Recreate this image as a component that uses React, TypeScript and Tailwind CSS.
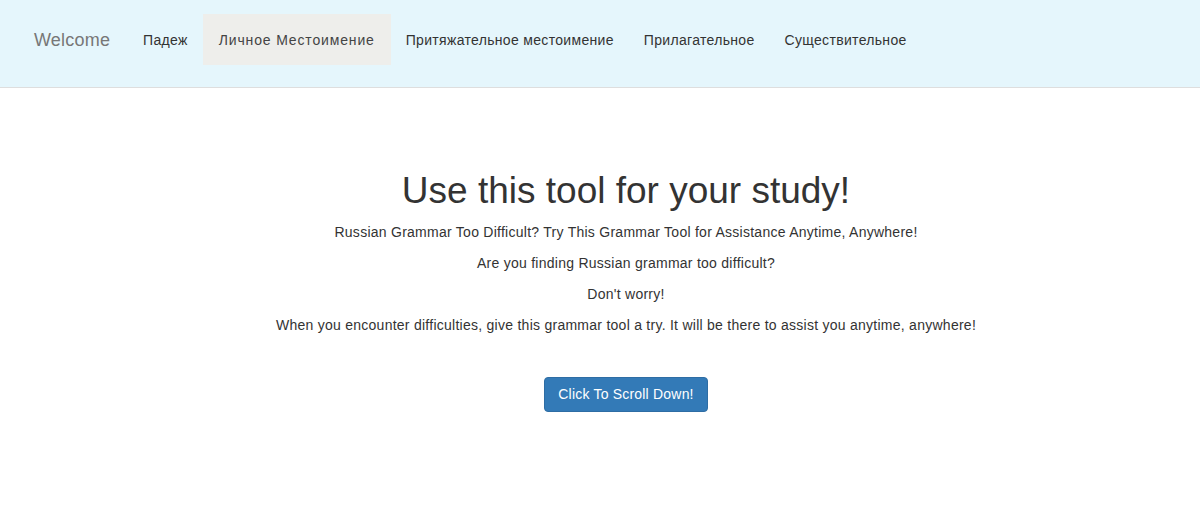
import React from "react";

const links = ["Падеж", "Личное Местоимение", "Притяжательное местоимение", "Прилагательное", "Существительное"];

export default function App() {
  return (
    <div className="min-h-[516px] bg-white" style={{ fontFamily: '"Liberation Sans", Arial, sans-serif' }}>
      <nav className="h-[88px] bg-[#e5f6fc] border-b border-[#dedede] pt-[14px] pl-[19px]">
        <div className="flex items-start h-[51px]">
          <a className="pl-[15px] pr-[18px] h-[51px] leading-[53px] text-[18px] text-[#777] tracking-[0.2px]">Welcome</a>
          {links.map((l, i) => (
            <a
              key={l}
              className={`px-[15px] h-[51px] leading-[53px] text-[14px] ${
                i === 1 ? "bg-[#eeeeeb] text-[#444] px-[16px] tracking-[0.85px]" : "text-[#333] tracking-[0.32px]"
              }`}
            >
              {l}
            </a>
          ))}
        </div>
      </nav>
      <main className="pl-[52px] text-center text-[#333]">
        <h1 className="mt-[82px] text-[37px] leading-[42px] mb-[10px]">Use this tool for your study!</h1>
        <p className="text-[14px] leading-[20px] mb-[11px] tracking-[0.26px]">Russian Grammar Too Difficult? Try This Grammar Tool for Assistance Anytime, Anywhere!</p>
        <p className="text-[14px] leading-[20px] mb-[11px] tracking-[0.26px]">Are you finding Russian grammar too difficult?</p>
        <p className="text-[14px] leading-[20px] mb-[11px] tracking-[0.26px]">Don't worry!</p>
        <p className="text-[14px] leading-[20px] tracking-[0.26px]">When you encounter difficulties, give this grammar tool a try. It will be there to assist you anytime, anywhere!</p>
        <button className="mt-[42px] h-[35px] px-[13px] text-[14px] tracking-[0.2px] text-white bg-[#337ab7] border border-[#2e6da4] rounded-[4px]">
          Click To Scroll Down!
        </button>
      </main>
    </div>
  );
}
